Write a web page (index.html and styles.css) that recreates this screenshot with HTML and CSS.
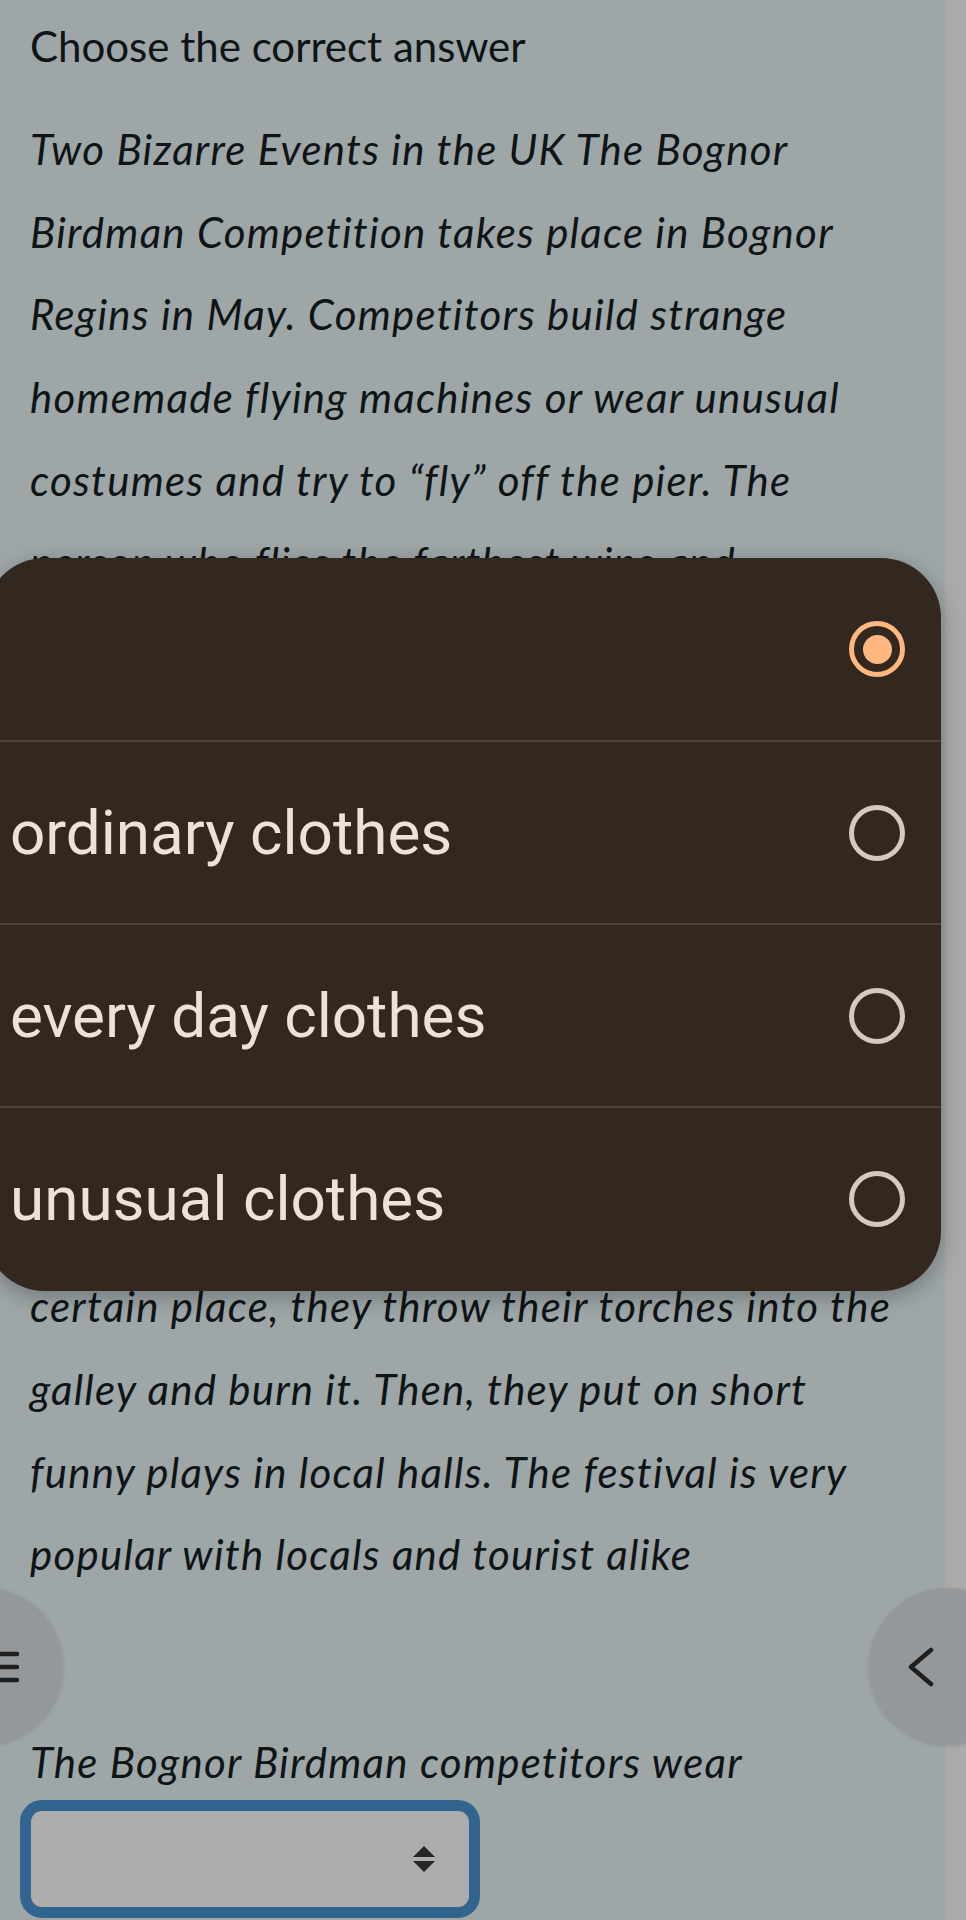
FILE: index.html
```html
<!DOCTYPE html>
<html lang="en">
<head>
    <meta charset="UTF-8">
    <title>Choose the correct answer</title>
    <link rel="stylesheet" href="styles.css">
</head>
<body>
<div class="page">
    <main class="content">
        <p class="prompt">Choose the correct answer</p>
        <p class="passage">Two Bizarre Events in the UK The Bognor<br>
            Birdman Competition takes place in Bognor<br>
            Regins in May. Competitors build strange<br>
            homemade flying machines or wear unusual<br>
            costumes and try to “fly” off the pier. The<br>
            person who flies the farthest wins and<br>
            raises money for charity. Up Helly Aa is a<br>
            fire festival in Lerwick, Shetland. It takes<br>
            place on the last Tuesday in January. About<br>
            a thousand people dress up as Vikings and<br>
            carry burning torches through the streets<br>
            of the town. They pull a large wooden Viking<br>
            ship, called a galley, behind them. When<br>
            they reach a<br>
            certain place, they throw their torches into the<br>
            galley and burn it. Then, they put on short<br>
            funny plays in local halls. The festival is very<br>
            popular with locals and tourist alike</p>
        <p class="question">The Bognor Birdman competitors wear</p>
        <div class="select">
            <svg class="select-arrows" width="22" height="26" viewBox="0 0 22 26">
                <path d="M11 0 L22 11 L0 11 Z" fill="#262626"/>
                <path d="M0 15 L22 15 L11 26 Z" fill="#262626"/>
            </svg>
        </div>
    </main>
    <div class="rail"></div>
</div>

<button class="side-btn side-btn-left" aria-label="Menu">
    <svg width="40" height="40" viewBox="0 0 40 40">
        <path d="M4 7 H32 M4 20 H32 M4 33 H32" stroke="#202020" stroke-width="4.5" stroke-linecap="round"/>
    </svg>
</button>
<button class="side-btn side-btn-right" aria-label="Back">
    <svg width="30" height="40" viewBox="0 0 30 40">
        <path d="M24 3 L4 20 L24 37" fill="none" stroke="#1f1f1f" stroke-width="4.5" stroke-linecap="round" stroke-linejoin="round"/>
    </svg>
</button>

<div class="picker">
    <div class="picker-row">
        <span class="picker-label"></span>
        <span class="radio radio-checked"></span>
    </div>
    <div class="picker-row">
        <span class="picker-label">ordinary clothes</span>
        <span class="radio"></span>
    </div>
    <div class="picker-row">
        <span class="picker-label">every day clothes</span>
        <span class="radio"></span>
    </div>
    <div class="picker-row">
        <span class="picker-label">unusual clothes</span>
        <span class="radio"></span>
    </div>
</div>
</body>
</html>
```

FILE: styles.css
```css
body {
    margin: 0;
    height: 1920px;
    overflow: hidden;
    background: #9ea6a8;
    font-family: Lato, "Noto Sans", sans-serif;
    color: #0f1416;
    position: relative;
}
.page {
    display: flex;
    min-height: 1920px;
}
.content {
    flex: 1;
    padding: 17px 0 0 30px;
}
.rail {
    width: 21px;
    background: #aaaaaa;
}
.prompt {
    margin: 0;
    font-size: 42px;
    line-height: 58px;
}
.passage {
    margin: 33px 0 0;
    font-size: 42px;
    font-style: italic;
    letter-spacing: 1.25px;
    line-height: 82.65px;
    white-space: nowrap;
}
.question {
    margin: 137px 0 0;
    font-size: 42px;
    font-style: italic;
    letter-spacing: 1.25px;
    line-height: 58px;
}
.select {
    margin: 9px 0 0 -10px;
    width: 460px;
    height: 118px;
    box-sizing: border-box;
    border: 11px solid #31648f;
    border-radius: 22px;
    background: #adadad;
    display: flex;
    align-items: center;
    justify-content: flex-end;
    padding-right: 34px;
}
.select-arrows {
    display: block;
}
.side-btn {
    position: absolute;
    top: 1588px;
    width: 157px;
    height: 157px;
    border: none;
    border-radius: 50%;
    background: #95989a;
    box-shadow: 0 1px 4px rgba(0,0,0,0.12);
    display: flex;
    align-items: center;
    padding: 0;
}
.side-btn-left {
    left: -94px;
    justify-content: flex-end;
    padding-right: 38px;
}
.side-btn-right {
    left: 869px;
    justify-content: flex-start;
    padding-left: 38px;
}
.picker {
    position: absolute;
    left: -15px;
    top: 558px;
    width: 956px;
    height: 733px;
    background: #332820;
    border-radius: 60px;
    box-shadow: 0 6px 22px rgba(0,0,0,0.28);
    overflow: hidden;
    font-family: Roboto, "Noto Sans", sans-serif;
    color: #eee2d8;
}
.picker-row {
    height: 183px;
    box-sizing: border-box;
    display: flex;
    align-items: center;
    justify-content: space-between;
    padding: 0 36px 0 25px;
    border-top: 2px solid #4c4239;
}
.picker-row:first-child {
    border-top: none;
    height: 182px;
}
.picker-label {
    font-size: 62px;
}
.radio {
    width: 56px;
    height: 56px;
    box-sizing: border-box;
    border: 5px solid #d8c9be;
    border-radius: 50%;
    display: flex;
    align-items: center;
    justify-content: center;
}
.radio-checked {
    border-color: #ffb77d;
}
.radio-checked::after {
    content: "";
    width: 29px;
    height: 29px;
    border-radius: 50%;
    background: #ffb77d;
}
```
